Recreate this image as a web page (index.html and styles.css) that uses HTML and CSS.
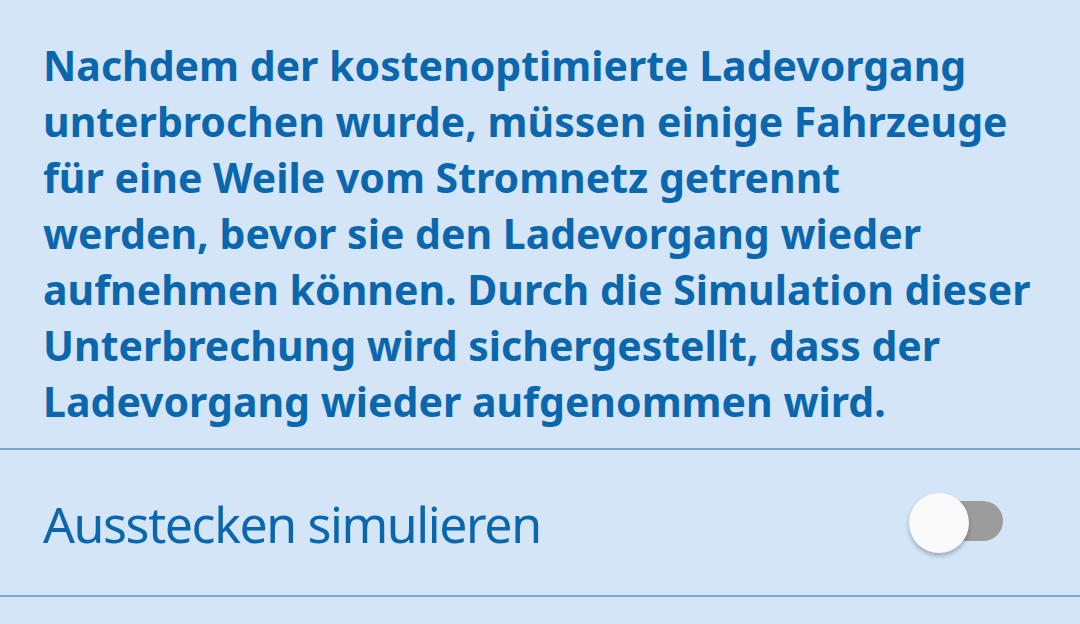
FILE: index.html
```html
<!DOCTYPE html>
<html lang="de">
<head>
<meta charset="utf-8">
<link rel="stylesheet" href="styles.css">
</head>
<body>
<div class="screen">
  <section class="info">
    <p class="info-text">Nachdem der kostenoptimierte Ladevorgang<br>unterbrochen wurde, müssen einige Fahrzeuge<br>für eine Weile vom Stromnetz getrennt<br>werden, bevor sie den Ladevorgang wieder<br>aufnehmen können. Durch die Simulation dieser<br>Unterbrechung wird sichergestellt, dass der<br>Ladevorgang wieder aufgenommen wird.</p>
  </section>
  <div class="row">
    <span class="row-label">Ausstecken simulieren</span>
    <span class="switch"><span class="track"></span><span class="thumb"></span></span>
  </div>
</div>
</body>
</html>
```

FILE: styles.css
```css
html, body {
  margin: 0;
  padding: 0;
  background: #d3e5f7;
}
.screen {
  width: 1080px;
  height: 624px;
  overflow: hidden;
  background: #d3e5f7;
  font-family: "Noto Sans", "Open Sans", sans-serif;
  color: #0b67ad;
}
.info {
  box-sizing: border-box;
  padding: 37px 0 0 43px;
  height: 450px;
  border-bottom: 2px solid #7ba8cf;
}
.info-text {
  margin: 0;
  font-weight: 700;
  font-size: 41px;
  line-height: 56px;
  white-space: nowrap;
}
.row {
  box-sizing: border-box;
  height: 147px;
  border-bottom: 2px solid #7ba8cf;
  display: flex;
  align-items: center;
  padding: 0 77px 0 43px;
  justify-content: space-between;
}
.row-label {
  font-size: 50px;
  font-weight: 400;
  letter-spacing: -1.4px;
  line-height: 68px;
  margin-top: 2px;
}
.switch {
  position: relative;
  width: 94px;
  height: 60px;
  display: block;
}
.track {
  position: absolute;
  left: 8px;
  right: 0;
  top: 8px;
  height: 40px;
  border-radius: 20px;
  background: #9c9c9c;
}
.thumb {
  position: absolute;
  left: 0;
  top: 0;
  width: 60px;
  height: 60px;
  border-radius: 50%;
  background: #fafafa;
  box-shadow: 0 3px 4px rgba(0,0,0,0.25);
}
```
